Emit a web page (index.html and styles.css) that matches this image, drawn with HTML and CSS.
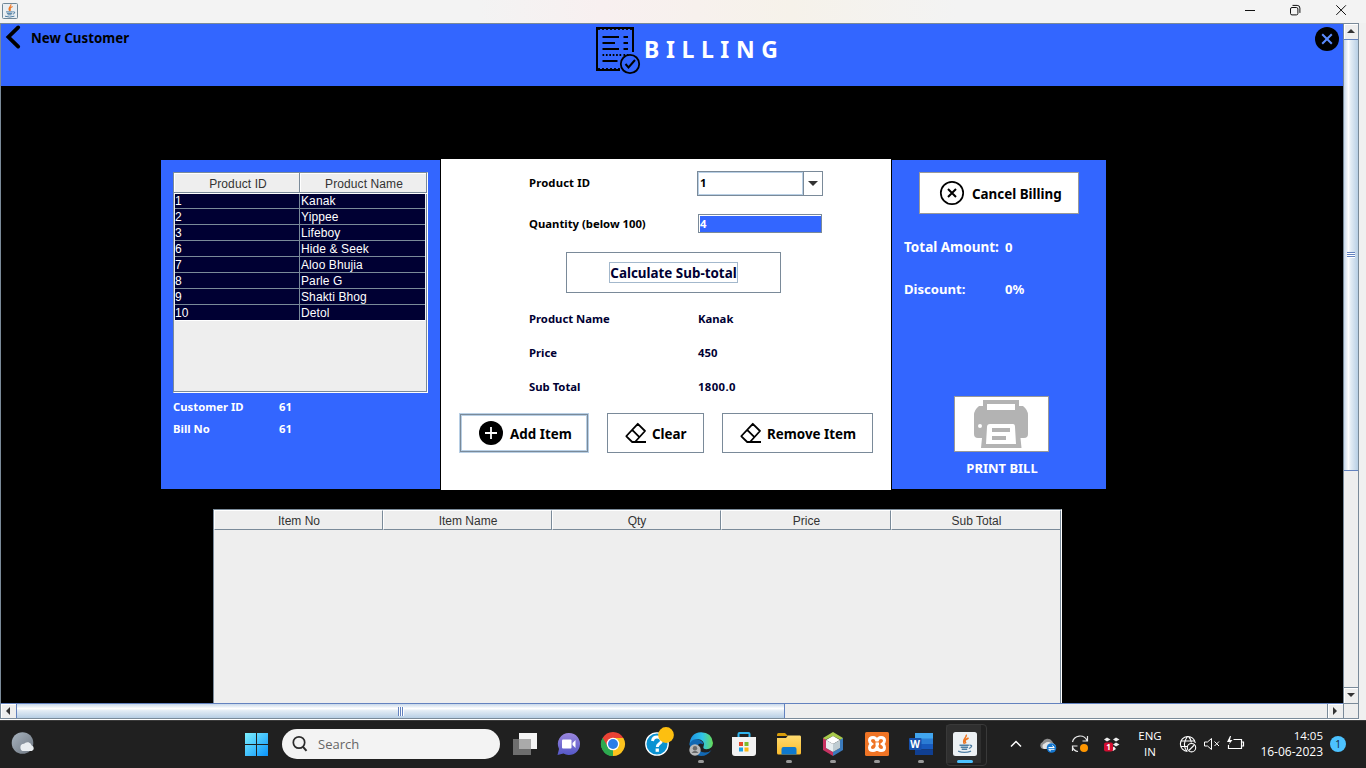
FILE: index.html
```
<!DOCTYPE html>
<html lang="en">
<head>
<meta charset="utf-8">
<title>Billing</title>
<link rel="stylesheet" href="styles.css">
</head>
<body>
<svg class="defs" width="0" height="0">
  <defs>
    <symbol id="java" viewBox="0 0 16 16">
      <path d="M8.9 1.2C9.8 3.4 5.3 4.5 7.6 8M10.6 3.6C8.2 4.8 7.3 5.5 8.7 7.6" fill="none" stroke="#ef7622" stroke-width="1.1"/>
      <path d="M4 8.9H10.8M4.9 10.4H10.2M5.6 11.8H9.6M11.2 8.8Q13.4 8.7 12.6 10Q12 11 10.8 11.2M3 13.2Q7.5 15 12.4 13.2" fill="none" stroke="#4f7ea3" stroke-width="1"/>
    </symbol>
    <symbol id="eraser" viewBox="0 0 22 22">
      <path d="M1.4 14L12.8 1.8L20 9L10 20H7.200L1.400 14.400ZM7.400 8.200L14.400 15.200M8 20H21" fill="none" stroke="#000" stroke-width="1.800" stroke-linejoin="round"/>
    </symbol>
    <linearGradient id="win" x1="0" y1="0" x2="1" y2="1"><stop offset="0" stop-color="#7df0ff"/><stop offset="1" stop-color="#0a93fb"/></linearGradient>
    <linearGradient id="moon" x1="0" y1="0" x2="1" y2="1"><stop offset="0" stop-color="#a9b4c0"/><stop offset="1" stop-color="#6d7680"/></linearGradient>
    <linearGradient id="chat" x1="0" y1="0" x2="0" y2="1"><stop offset="0" stop-color="#9a86dd"/><stop offset="1" stop-color="#5558c8"/></linearGradient>
    <linearGradient id="edge" x1="0" y1="0" x2="1" y2="0"><stop offset="0" stop-color="#1b8fe0"/><stop offset=".55" stop-color="#2fc3e8"/><stop offset="1" stop-color="#67dc55"/></linearGradient>
    <linearGradient id="folder" x1="0" y1="0" x2="0" y2="1"><stop offset="0" stop-color="#ffdb70"/><stop offset="1" stop-color="#fbbc2d"/></linearGradient>
  </defs>
</svg>

<header class="titlebar">
  <svg class="app-icon" viewBox="0 0 16 16"><rect x=".5" y=".5" width="15" height="15" rx="1" fill="#e9eef2" stroke="#6f8797"/><use href="#java" width="16" height="16"/></svg>
  <svg class="win-buttons" viewBox="0 0 110 20" fill="none" stroke="#111" stroke-width="1"><path d="M0 10.5H10M91.3 5.3l9.6 9.6M100.9 5.3l-9.6 9.6"/><rect x="45.5" y="7.5" width="7.4" height="7.4" rx="1.5"/><path d="M47.5 5.4H52.2Q54.9 5.4 54.9 8.1V12.9"/></svg>
</header>

<main class="app">
  <section class="viewport">
    <div class="banner">
      <svg class="back" viewBox="0 0 16 26"><path d="M13.200 3.400L3.400 13L13.200 22.600" fill="none" stroke="#000" stroke-width="3.800" stroke-linecap="round"/></svg>
      <span class="new-customer">New Customer</span>
      <svg class="receipt" viewBox="0 0 46 50" fill="none" stroke="#000">
        <path d="M1 1V45M37 1V26" stroke-width="2"/>
        <path d="M0 2H38M0 44H24" stroke-width="2.2"/><path d="M2 3.4H38M2 42.6H24" stroke-width="1" stroke-dasharray="2 2"/>
        <path d="M6.500 11H23M6.500 17H19M6.500 23H23M6.500 35H21.500M27.500 11H32M27.500 17H32M27.500 23H32" stroke-width="2"/>
        <path d="M6.500 29H25.500M27.500 29H32.500" stroke-width="2" stroke-dasharray="1.700 1.700"/>
        <circle cx="34" cy="38" r="9.200" stroke-width="1.800"/><path d="M29.500 38L32.500 41.500L39 34" stroke-width="2"/>
      </svg>
      <h1 class="title">BILLING</h1>
      <svg class="close" viewBox="0 0 24 24"><circle cx="12" cy="12" r="12"/><path d="M7.200 7.200l9.600 9.600M16.800 7.200l-9.600 9.600" stroke="#5b8cff" stroke-width="2"/></svg>
    </div>

    <div class="panels">
      <section class="panel side">
        <div class="ptable">
          <div class="prow head"><span>Product ID</span><span>Product Name</span></div>
          <div class="prow first"><span>1</span><span>Kanak</span></div>
          <div class="prow"><span>2</span><span>Yippee</span></div>
          <div class="prow"><span>3</span><span>Lifeboy</span></div>
          <div class="prow"><span>6</span><span>Hide &amp; Seek</span></div>
          <div class="prow"><span>7</span><span>Aloo Bhujia</span></div>
          <div class="prow"><span>8</span><span>Parle G</span></div>
          <div class="prow"><span>9</span><span>Shakti Bhog</span></div>
          <div class="prow"><span>10</span><span>Detol</span></div>
        </div>
        <dl class="ids"><dt>Customer ID</dt><dd>61</dd><dt>Bill No</dt><dd>61</dd></dl>
      </section>

      <section class="panel form">
        <div class="field"><label>Product ID</label><div class="combo"><span>1</span><i><b></b></i></div></div>
        <div class="field qty"><label>Quantity (below 100)</label><div class="input">4</div></div>
        <button class="btn calc"><span>Calculate Sub-total</span></button>
        <div class="field info"><label>Product Name</label><span>Kanak</span></div>
        <div class="field info"><label>Price</label><span>450</span></div>
        <div class="field info"><label>Sub Total</label><span class="amount">1800.0</span></div>
        <div class="actions">
          <button class="btn add"><svg width="24" height="24" viewBox="0 0 24 24"><circle cx="12" cy="12" r="12"/><path d="M12 6v12M6 12h12" stroke="#fff" stroke-width="1.800"/></svg><span>Add Item</span></button>
          <button class="btn clear"><svg width="22" height="22"><use href="#eraser"/></svg><span>Clear</span></button>
          <button class="btn remove"><svg width="22" height="22"><use href="#eraser"/></svg><span>Remove Item</span></button>
        </div>
      </section>

      <section class="panel totals">
        <button class="btn cancel"><svg width="24" height="24" viewBox="0 0 24 24" fill="none" stroke="#000"><circle cx="12" cy="12" r="11.200" stroke-width="1.700"/><path d="M8 8l8 8M16 8l-8 8" stroke-width="2"/></svg><span>Cancel Billing</span></button>
        <dl class="sums"><dt>Total Amount:</dt><dd>0</dd><dt class="discount">Discount:</dt><dd>0%</dd></dl>
        <div class="print">
          <svg viewBox="0 0 54 48"><path fill="#b3b3b3" d="M9 0H45V6H49Q54 10 54 15V34Q54 38 50 38H46.500L47.500 48H7L8 38H4Q0 38 0 34V15Q0 10 5 6H9Z"/><path fill="#fff" d="M13 4H41V10H13ZM16 24H39Q41 24 41 27L42 44H12L13 27Q13 24 16 24Z"/><circle cx="6" cy="26" r="2" fill="#fff"/><path fill="#b3b3b3" d="M18 28H36V32H18ZM18 36H32V40H18Z"/></svg>
        </div>
        <p class="print-label">PRINT BILL</p>
      </section>
    </div>

    <div class="items"><span>Item No</span><span>Item Name</span><span>Qty</span><span>Price</span><span>Sub Total</span></div>
  </section>

  <div class="vscroll"><i class="arrow up"></i><div class="vthumb"><b></b></div><div class="vtrack"></div><i class="arrow down"></i></div>
  <div class="hscroll"><i class="arrow left"></i><div class="hthumb"><b></b></div><div class="htrack"></div><i class="arrow right"></i></div>
  <div class="corner"></div>
</main>

<footer class="taskbar">
  <svg class="weather" viewBox="0 0 26 24"><circle cx="11.500" cy="11" r="10.800" fill="url(#moon)"/><path d="M13 19a3.600 3.600 0 0 1 0-7.200a4.400 4.400 0 0 1 7.700 1.800a2.800 2.800 0 0 1 0 5.400z" fill="#e9edf0"/></svg>
  <svg class="start" viewBox="0 0 23 23"><path fill="url(#win)" d="M0 0H11V11H0ZM12 0H23V11H12ZM0 12H11V23H0ZM12 12H23V23H12Z"/></svg>
  <div class="search"><svg width="16" height="16" viewBox="0 0 16 16" fill="none" stroke="#2b2b2b" stroke-width="1.700"><circle cx="7" cy="6.500" r="5.700"/><path d="M11 10.800L14.500 14.800" stroke-width="2"/></svg><span>Search</span></div>
  <div class="apps">
    <div><svg viewBox="0 0 24 24"><rect x="6" y="1" width="18" height="16" fill="#f4f4f4"/><rect x="0" y="7" width="18" height="16" fill="#777" opacity=".9"/><rect x="6" y="7" width="12" height="10" fill="#aaa"/></svg></div>
    <div><svg viewBox="0 0 24 24"><path d="M12 1a11 11 0 1 1-5.500 20.500L.5 23L2 17A11 11 0 0 1 12 1z" fill="url(#chat)"/><rect x="5" y="7.500" width="9.500" height="9" rx="1" fill="#fff"/><path d="M15.500 11L18.500 8V16L15.500 13z" fill="#fff"/></svg></div>
    <div><svg viewBox="0 0 24 24"><path d="M12 12L1.600 6A12 12 0 0 1 22.400 6Z" fill="#e94235"/><path d="M12 12L22.400 6A12 12 0 0 1 12 24Z" fill="#fcc31e"/><path d="M12 12L12 24A12 12 0 0 1 1.600 6Z" fill="#2da94f"/><path d="M12 6H22.400L12 24L17.200 15z" fill="#fcc31e"/><path d="M1.600 6L6.800 15L12 12V6z" fill="#e94235"/><path d="M1.600 6L6.800 15L12 18V24A12 12 0 0 1 1.600 6z" fill="#2da94f"/><circle cx="12" cy="12" r="6.300" fill="#fff"/><circle cx="12" cy="12" r="5" fill="#2d7de9"/></svg></div>
    <div><svg viewBox="0 0 24 24"><circle cx="12" cy="12" r="11.200" fill="#0a92d2" stroke="#fff" stroke-width="1.300"/><path d="M7.500 9Q8 5 12 5T16.500 8.500Q16.500 10.500 14 12Q12.300 13.200 12.300 15" fill="none" stroke="#fff" stroke-width="3"/><rect x="10.600" y="16.500" width="3.300" height="3.300" fill="#fff"/><circle cx="21" cy="3" r="7.900" fill="#fdbf10"/></svg></div>
    <div class="run"><svg viewBox="0 0 24 24"><path d="M.5 13Q1 1 12 .3Q23 .5 24 11Q23.500 17 17.500 17.200Q13.500 17 14.500 14.500Q16 12 14 9.500Q10 5.500 4 9Q1.500 10.500.5 13z" fill="url(#edge)"/><path d="M.5 12Q3 6 9.500 7.500Q14 9 14.500 12.500Q9.500 10 8.500 14.500Q9 20 16 20.500Q20 20.500 22.500 18Q18.500 24 12 24Q1 23 .5 12z" fill="#1268b3"/><circle cx="6" cy="18" r="5.700" fill="#b9b9b9"/><circle cx="6" cy="16.300" r="2.200" fill="#6b6b6b"/><path d="M2.500 21Q6 16.500 9.500 21z" fill="#6b6b6b"/></svg></div>
    <div><svg class="store" viewBox="0 0 24 24"><path d="M6.500 6V2Q6.500 1 7.500 1H16.500Q17.500 1 17.500 2V6" fill="none" stroke="#2fb4ee" stroke-width="2"/><path d="M0 5H24V21Q24 24 21 24H3Q0 24 0 21z" fill="#f2f2f2"/><path d="M7 10H11V14H7z" fill="#e7492a"/><path d="M12.500 10H16.500V14H12.500z" fill="#7dbb2d"/><path d="M7 15.500H11V19.500H7z" fill="#18a1e6"/><path d="M12.500 15.500H16.500V19.500H12.500z" fill="#fcb912"/></svg></div>
    <div class="run"><svg viewBox="0 0 24 24"><path d="M0 2.500Q0 1 1.500 1H8L11 4H0z" fill="#d89c0a"/><path d="M0 6H9L11 3.500H23Q24 3.500 24 5V21Q24 22.500 22.500 22.500H1.500Q0 22.500 0 21z" fill="url(#folder)"/><path d="M4.500 22.500V17Q4.500 15 6.500 15H17.500Q19.500 15 19.500 17V22.500z" fill="#0f79ce"/></svg></div>
    <div class="run"><svg viewBox="0 0 24 24"><path d="M12 0L22 6V9L12 4L2 9V6z" fill="#a8c94b"/><path d="M2 6L5 8V16L12 20V24L2 18z" fill="#c73262"/><path d="M22 6L19 8V16L12 20V24L22 18z" fill="#3b7bbd"/><path d="M12 4L19 8L12 12L5 8z" fill="#fff"/><path d="M5 8L12 12V20L5 16z" fill="#e6edf0"/><path d="M19 8L12 12V20L19 16z" fill="#bfccd2"/></svg></div>
    <div class="run"><svg viewBox="0 0 24 24"><rect width="24" height="24" rx="1.500" fill="#ef7425"/><g fill="none" stroke="#fff" stroke-width="3"><path d="M10.500 12H14M12 9Q11 5.500 8 5.500Q4.500 5.500 4.500 8.500Q4.500 10.500 6.500 12Q4.500 13.500 4.500 15.500Q4.500 18.500 8 18.500Q11 18.500 12 15Q13 18.500 16 18.500Q19.500 18.500 19.500 15.500Q19.500 13.500 17.500 12Q19.500 10.500 19.500 8.500Q19.500 5.500 16 5.500Q13 5.500 12 9"/></g></svg></div>
    <div class="run word"><svg viewBox="0 0 24 24"><path d="M6 1H24V7H6z" fill="#41a5ee"/><path d="M6 6.500H24V12H6z" fill="#2b7cd3"/><path d="M6 12H24V17.500H6z" fill="#185abd"/><path d="M6 17.500H24V23H6z" fill="#103f91"/><rect y="6" width="12.500" height="12" rx="1" fill="#1650ac"/></svg><em>W</em></div>
    <div class="run active"><svg viewBox="0 0 24 24"><rect width="24" height="24" rx="2.500" fill="#edf1f4"/><use href="#java" x="1" y="1" width="22" height="22"/></svg></div>
  </div>
  <div class="tray">
    <div><svg viewBox="0 0 20 20" fill="none" stroke="#fff" stroke-width="1.500"><path d="M5 12.500L10 7.500L15 12.500"/></svg></div>
    <div><svg viewBox="0 0 20 20"><path d="M5 15a3.700 3.700 0 0 1-.5-7A5.500 5.500 0 0 1 14 7L17 12V15z" fill="#8f8f8f"/><path d="M6 15a3 3 0 0 1 .5-5.500Q10 7 13 9Q17 9 18 13L15 15z" fill="#e3e3e3"/><circle cx="13.500" cy="14" r="4.800" fill="#1577cf"/><path d="M10.500 13.500H16M14.200 11.500L16.500 13.500M16.500 15.300H11M12.800 17L10.500 15.300" stroke="#fff" fill="none"/></svg></div>
    <div><svg viewBox="0 0 20 20" fill="none" stroke="#e8e8e8" stroke-width="1.200"><path d="M2.500 8A7.700 7.700 0 0 1 17 6.500M17.500 2V7H12.500M2.500 17V12H7.500M2.500 13Q4 17 8 17.500"/><circle cx="14" cy="14" r="4" fill="#ff9600" stroke="none"/></svg></div>
    <div class="drop"><svg viewBox="0 0 20 20"><path fill="#eee" d="M2 5.500L5 3.500L8.500 5.500L5 7.500zM11 5.500L14 3.500L17.500 5.500L14 7.500zM11 10.500L14 8.500L17.500 10.500L14 12.500zM8 15L12 12.500L14 15L11 17z"/><rect x="2" y="8.500" width="9" height="9" rx="2" fill="#d50e31"/></svg><em>1</em></div>
    <div class="lang">ENG<br>IN</div>
    <div class="s"><svg viewBox="0 0 20 20" fill="none" stroke="#fff" stroke-width="1.100"><path d="M9.500 17.500A7.500 7.500 0 1 1 17.300 9M9.500 2.500Q3.500 10 9 17.500M10.500 2.500Q13 5 13.300 8.500M3 7H17M3 12.500H9"/><circle cx="13.500" cy="13.700" r="4.200"/><path d="M10.800 16.500L16.300 11"/></svg></div>
    <div class="s"><svg viewBox="0 0 20 20" fill="none" stroke="#fff" stroke-width="1"><path d="M2.500 8H5.500L9.500 4.500V15.500L5.500 12H2.500zM12.500 7.500L17 12M17 7.500L12.500 12"/></svg></div>
    <div class="s"><svg class="battery" viewBox="0 0 20 20" fill="none" stroke="#fff" stroke-width="1.200"><path d="M8.500 5.500H16.500V14.500H3.500V11M17 8H18.500V12H17"/><path d="M5 2L2 8H5L3.500 11L7.500 6H5L6 2z" fill="#fff" stroke="none"/></svg></div>
    <div class="clock"><span>14:05</span><span>16-06-2023</span></div>
    <div class="badge">1</div>
  </div>
</footer>
</body>
</html>
```
FILE: styles.css
```
* { box-sizing: border-box; }
body { margin: 0; width: 1366px; height: 768px; overflow: hidden; background: #f0f0f0; font-family: "Noto Sans", "Open Sans", sans-serif; font-size: 11px; display: flex; flex-direction: column; }
.defs { height: 0; flex: none; }
h1, p, dl, dd { margin: 0; }
svg { display: block; flex: none; overflow: visible; }
button { font: inherit; padding: 0; }

.titlebar { height: 23px; flex: none; display: flex; justify-content: space-between; padding: 0 11px 0 2px; background: linear-gradient(90deg, #f3f3f3 35%, #f8f0f0 44%, #f6f2ea 58%, #f3f3f3 70%); }
.app-icon { width: 16px; height: 16px; margin-top: 3px; }
.win-buttons { width: 110px; height: 20px; }

.app { height: 697px; flex: none; display: grid; grid-template: 679px 16px / 1343px 16px; border-top: 1px solid #7a8a99; width: 1359px; background: #eee; border-bottom: 1px solid #fff; }
.viewport { border-left: 1px solid #7a8a99; background: #000; overflow: hidden; display: flex; flex-direction: column; }
.banner { height: 62px; flex: none; background: #36f; display: flex; align-items: flex-start; }
.back { width: 16px; height: 26px; margin: 0 0 0 4px; }
.new-customer { font-size: 13.300px; font-weight: 700; line-height: 18px; margin: 5px 0 0 10px; width: 120px; white-space: nowrap; }
.receipt { width: 46px; height: 50px; margin: 2px 0 0 445px; }
.title { font-size: 23px; line-height: 30px; letter-spacing: 6.600px; margin: 10px 0 0 2px; color: #fff; width: 160px; }
.close { width: 24px; height: 24px; margin: 3px 0 0 511px; }

.panels { display: flex; align-items: center; gap: 1px; margin: 73px 0 0 160px; height: 331px; flex: none; }
.panel { flex: none; height: 329px; background: #36f; color: #fff; font-weight: 700; }
.side { width: 279px; padding: 12px; }
.ptable { width: 255px; height: 221px; background: #eee; border: 1px solid #7a8a99; border-color: #7a8a99 #fff #fff #7a8a99; box-shadow: inset -1px -1px #7a8a99; color: #fff; font: 12px "Liberation Sans", Arial, sans-serif; }
.prow { display: grid; grid-template-columns: 124px 125px; height: 16px; margin-left: 1px; width: 250px; column-gap: 1px; background: #7a8a99; border-bottom: 1px solid #7a8a99; line-height: 16px; }
.prow.first { height: 15px; line-height: 14px; }
.prow:last-child { border-color: #fff; }
.prow span { background: #003; padding-left: 1px; height: 15px; letter-spacing: .1px; }
.prow.first span { height: 14px; }
.prow + .prow span:first-child { padding-left: 0; }
.prow.head { height: 21px; width: 253px; margin: 0; grid-template-columns: 125px 126px; border-bottom: 1px solid #fff; color: #333; text-align: center; line-height: 20px; }
.prow.head span { background: #eee; border: 1px solid #fff; border-width: 1px 0 0 1px; height: 19px; padding-left: 2px; }
.prow.head span + span { padding-left: 1px; }
.ids { display: grid; grid-template-columns: 106px 1fr; line-height: 22px; margin-top: 3px; font-size: 11.300px; }

.form { width: 450px; height: 331px; background: #fff; color: #003; padding: 12px 18px 0; display: flex; flex-direction: column; }
.field { display: grid; grid-template-columns: 169px 130px; margin-left: 70px; height: 34px; align-items: center; white-space: nowrap; font-size: 11.300px; }
.field:first-child { height: 25px; color: #000; }
.field:first-child label { letter-spacing: .15px; }
.field.qty { height: 20px; margin-top: 18px; color: #000; }
.field label, .info span { margin-top: -2px; }
.info .amount { letter-spacing: .4px; }
.combo { width: 126px; height: 25px; margin-left: -1px; border: 1px solid #7a8a99; display: flex; }
.combo span { flex: 1; border: 1px solid #b8cfe5; line-height: 20px; padding-left: 1px; }
.combo i { width: 19px; border-left: 1px solid #7a8a99; display: grid; place-items: center; }
.combo b { border: 5px solid transparent; border-top-color: #333; border-bottom: 0; }
.input { width: 124px; height: 19px; margin-top: -1px; background: #36f; color: #fff; border: 1px solid #7a8a99; line-height: 17px; padding-left: 1px; box-shadow: inset 1px 1px #fff; }
.btn { background: #fff; border: 1px solid #7a8a99; border-radius: 0; font-weight: 700; font-size: 13.400px; color: #000; display: flex; align-items: center; white-space: nowrap; }
.calc { width: 215px; height: 41px; margin: 18px 0 9px 107px; justify-content: center; color: #003; }
.calc span { border: 1px solid #a3b8cc; line-height: 18px; width: 129px; display: flex; justify-content: center; }
.actions { display: flex; gap: 18px; margin-top: 9px; }
.actions .btn { height: 40px; }
.add { width: 130px; padding-left: 19px; gap: 7px; }
.add.btn { border-color: #b8cfe5; box-shadow: inset 0 0 0 1px #7a8a99, inset 0 0 0 2px #b8cfe5; }
.clear { width: 97px; padding-left: 17px; gap: 5px; }
.remove { width: 151px; padding-left: 17px; gap: 5px; }
.btn span { padding-top: 1px; }

.totals { width: 214px; padding: 12px 12px 0; }
.cancel { width: 160px; height: 42px; margin-left: 15px; padding-left: 20px; gap: 8px; border-color: #999; }
.sums { display: grid; grid-template-columns: 101px 1fr; font-size: 13.500px; line-height: 42px; margin-top: 12px; white-space: nowrap; }
.sums dd, .sums .discount { font-size: 13.100px; }
.print { width: 95px; height: 56px; background: #fff; border: 1px solid #999; margin: 86px 0 0 50px; padding: 3px 19px; }
.print svg { width: 54px; height: 48px; }
.print-label { font-size: 13px; line-height: 18px; margin: 7px 0 0; width: 196px; text-align: center; }

.items { width: 849px; height: 194px; flex: none; margin: 19px 0 0 212px; background: #eee; border: 1px solid #7a8a99; border-width: 1px 1px 0; border-right-color: #fff; box-shadow: inset -1px 0 #7a8a99; display: grid; grid-template-columns: 169px 169px 169px 170px 170px; align-items: start; text-align: center; font: 12px/20px "Liberation Sans", Arial, sans-serif; color: #333; }
.items span { height: 20px; padding-left: 1px; border: 1px solid #7a8a99; border-color: #fff #7a8a99 #7a8a99 #fff; }

.vscroll { border-left: 1px solid #7a8a99; border-right: 1px solid #7a8a99; display: flex; flex-direction: column; }
.arrow { width: 16px; height: 15px; flex: none; display: grid; place-items: center; border: 1px solid #fff; border-width: 1px 0 0 1px; }
.vscroll .arrow { width: 14px; height: 15px; }
.arrow::after { content: ""; border: 4px solid transparent; margin: 0 1px 1px 0; }
.up::after { border-bottom: 4px solid #333; border-top: 0; }
.down::after { border-top: 4px solid #333; border-bottom: 0; }
.left::after { border-right: 4px solid #333; border-left: 0; margin-right: 2px; }
.right::after { border-left: 4px solid #333; border-right: 0; margin-right: 2px; }
.vscroll .arrow::after { margin: 0 2px 2px 0; }
.vthumb { height: 432px; border-top: 1px solid #6382bf; border-bottom: 1px solid #6382bf; background: linear-gradient(90deg, #c8d8ea, #fff 32%, #e3ecf5 48%, #b8cfe5); display: grid; place-items: center; }
.vthumb b { width: 8px; height: 6px; background: repeating-linear-gradient(#6382bf 0 1px, #fff 1px 2px); }
.vtrack { flex: 1; border-bottom: 1px solid #7a8a99; }
.hscroll { border: 1px solid #7a8a99; border-width: 1px 0 1px 1px; border-top-color: #6382bf; display: flex; }
.hthumb { width: 769px; border-left: 1px solid #6382bf; border-right: 1px solid #6382bf; background: linear-gradient(#c8d8ea, #fff 32%, #e3ecf5 48%, #b8cfe5); display: grid; place-items: center; }
.hthumb b { height: 9px; width: 6px; background: repeating-linear-gradient(90deg, #6382bf 0 1px, #fff 1px 2px); }
.htrack { flex: 1; border-right: 1px solid #7a8a99; }
.hscroll .arrow { width: 15px; height: 14px; }
.corner { border: 1px solid #7a8a99; }

.taskbar { height: 48px; flex: none; background: #202020; border-top: 1px solid #3a3a3a; padding-bottom: 1px; display: flex; align-items: center; color: #fff; font-family: "Open Sans", "Noto Sans", sans-serif; }
.weather { width: 26px; height: 24px; margin-left: 11px; }
.start { width: 23px; height: 23px; margin-left: 208px; }
.search { width: 218px; height: 30px; margin: 0 3px 0 14px; border-radius: 15px; background: #f3f3f3; color: #666; font-size: 13px; display: flex; align-items: center; padding-left: 10px; gap: 10px; }
.apps { display: flex; height: 46px; }
.apps > div { width: 44px; display: grid; place-items: center; position: relative; }
.apps svg { width: 24px; height: 24px; }
.apps .store { margin-right: 2px; }
.run::after { content: ""; position: absolute; bottom: 4px; left: 19px; width: 6px; height: 3px; border-radius: 2px; background: #999; }
.word em { position: absolute; left: 10px; top: 16px; width: 12px; text-align: center; font: 700 10px/14px "Open Sans", sans-serif; }
.active { background: linear-gradient(#2f2f2f, #2f2f2f) 3px 4px / 35px 38px no-repeat; }
.active::before { content: ""; position: absolute; left: 3px; top: 3px; width: 39px; height: 40px; border-radius: 4px; border: 1px solid #393939; }
.active::after { left: 14px; width: 16px; background: #4cc2ff; }
.tray { display: flex; align-items: center; margin-left: 13px; }
.tray > div { width: 32px; display: grid; place-items: center; position: relative; flex: none; }
.tray > div.s { width: 24px; }
.tray svg { width: 20px; height: 20px; }
.tray .battery { margin-right: 2px; }
.tray > .lang { width: 44px; font-size: 11.500px; line-height: 16px; text-align: center; margin-right: 4px; }
.drop em { position: absolute; left: 8px; top: 8px; width: 9px; font: 700 8px/10px "Open Sans", sans-serif; text-align: center; }
.tray > .clock { width: 75px; font-size: 12px; line-height: 16px; justify-items: end; white-space: nowrap; }
.clock span:first-child { font-size: 11.500px; }
.tray > .badge { width: 16px; height: 16px; border-radius: 8px; background: #4cc2ff; color: #123; font-size: 10px; line-height: 16px; margin-left: 7px; }
```
